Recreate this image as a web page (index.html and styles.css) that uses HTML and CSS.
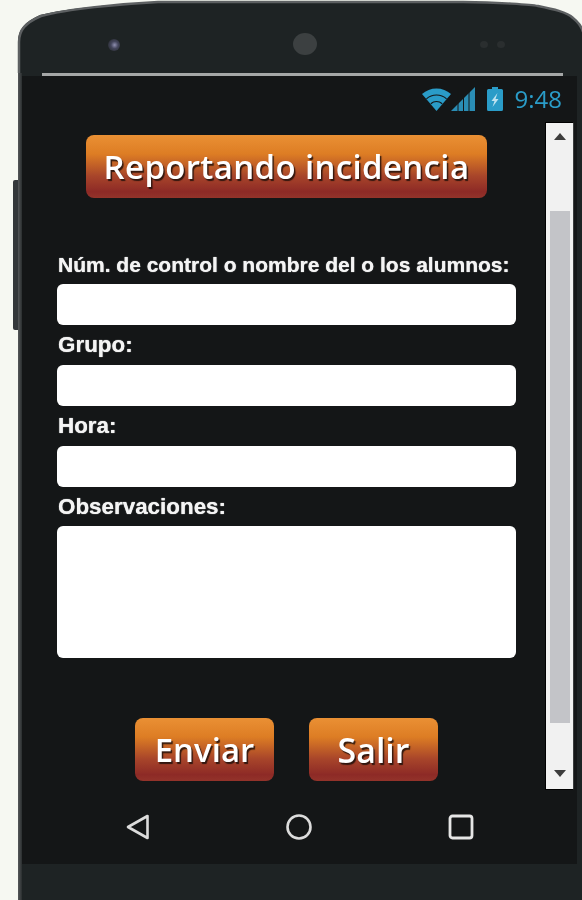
FILE: index.html
```html
<!DOCTYPE html>
<html lang="es">
<head>
<meta charset="utf-8">
<title>Reportando incidencia</title>
<link rel="stylesheet" href="styles.css">
</head>
<body>
<div class="phone">
  <span class="side-button"></span>
  <div class="bezel-top">
    <svg class="bezel-shape" viewBox="0 0 564 73" width="564" height="73" aria-hidden="true">
      <path d="M0 73 V42 C0 30 6 22 22 15 C50 8 100 4 140 2 H445 C480 2 515 5 520 6 C535 9 549 12 555 18 C560 22 564 28 565 32 V73 Z" fill="#1e2324"/>
      <path d="M1 73 V42 C1 30 7 23 23 16 C50 9 100 4 140 2 H445 C480 2 515 5 520 6 C535 9 549 12 555 18 C560 22 564 28 565 32" fill="none" stroke="#5d6062" stroke-width="2.500"/>
    </svg>
    <span class="speaker-dot"></span>
    <span class="camera"></span>
    <span class="sensors"><i></i><i></i></span>
  </div>
  <div class="hairline"></div>
  <div class="screen">
    <div class="statusbar">
      <svg class="ic-wifi" viewBox="0 0 29 24" width="29" height="24" aria-hidden="true">
        <path d="M14.500 24 L0 7 A21.600 21.600 0 0 1 29 7 Z" fill="#2a9cc8"/>
        <path d="M4.430 11.900 A15 15 0 0 1 24.570 11.900 M8.800 16.700 A8.500 8.500 0 0 1 20.200 16.700" fill="none" stroke="#141617" stroke-width="1.200"/>
      </svg>
      <svg class="ic-signal" viewBox="0 0 24 24" width="24" height="24" aria-hidden="true">
        <path d="M0 24 L24 0 V24 Z" fill="#2a8db5"/>
        <path d="M7 0 V24 M12.500 0 V24 M18 0 V24" fill="none" stroke="#141617" stroke-width="1"/>
      </svg>
      <svg class="ic-battery" viewBox="0 0 16 24" width="16" height="24" aria-hidden="true">
        <path d="M5 0 H11 V2 H14.500 Q16 2 16 3.500 V22.500 Q16 24 14.500 24 H1.500 Q0 24 0 22.500 V3.500 Q0 2 1.500 2 H5 Z" fill="#2a9cc8"/>
        <path d="M10.500 6 L4.500 14 H7.500 L5.500 20 L11.500 12 H8.500 Z" fill="#bfe3f0"/>
      </svg>
      <span class="clock">9:48</span>
    </div>
    <div class="viewport">
      <div class="form">
        <div class="title-row"><div class="btn btn-title">Reportando incidencia</div></div>
        <label class="field-label">Núm. de control o nombre del o los alumnos:</label>
        <div class="input"></div>
        <label class="field-label field-label-short">Grupo:</label>
        <div class="input"></div>
        <label class="field-label field-label-short">Hora:</label>
        <div class="input"></div>
        <label class="field-label field-label-short field-label-last">Observaciones:</label>
        <div class="input input-area"></div>
        <div class="actions">
          <div class="btn btn-send">Enviar</div>
          <div class="btn btn-exit">Salir</div>
        </div>
      </div>
      <div class="scrollbar">
        <span class="arrow arrow-up"></span>
        <span class="thumb"></span>
        <span class="arrow arrow-down"></span>
      </div>
    </div>
    <div class="navbar">
      <svg viewBox="0 0 26 28" width="26" height="28" aria-hidden="true"><path d="M22.500 3 V25 L3 14 Z" fill="none" stroke="#dcdcdc" stroke-width="2.600" stroke-linejoin="round"/></svg>
      <svg viewBox="0 0 28 28" width="28" height="28" aria-hidden="true"><circle cx="14" cy="14" r="11.500" fill="none" stroke="#dcdcdc" stroke-width="2.600"/></svg>
      <svg viewBox="0 0 28 28" width="28" height="28" aria-hidden="true"><rect x="3" y="3" width="22" height="22" rx="2.500" fill="none" stroke="#e6e6e6" stroke-width="2.800"/></svg>
    </div>
  </div>
</div>
</body>
</html>
```
FILE: styles.css
```css
html, body {
  margin: 0;
  height: 900px;
  overflow: hidden;
  background: #f6f8f2;
}
.phone {
  position: relative;
  box-sizing: border-box;
  margin: 0 0 0 18px;
  width: 564px;
  height: 900px;
  padding-left: 4px;
  background:
    linear-gradient(90deg, #55585a, #2a2e2f) 0 73px / 4px 100% no-repeat,
    linear-gradient(transparent 73px, #1e2324 73px);
  filter: blur(0.4px);
}
.side-button {
  position: absolute;
  left: -5px;
  top: 180px;
  width: 5px;
  height: 150px;
  background: #33373a;
  border-radius: 2px 0 0 2px;
}
.bezel-top {
  position: relative;
  height: 73px;
}
.bezel-shape, .speaker-dot, .camera, .sensors {
  position: absolute;
}
.bezel-shape {
  left: -4px;
  top: 0;
  overflow: visible;
}
.speaker-dot {
  left: 86px;
  top: 39px;
  width: 12px;
  height: 12px;
  border-radius: 50%;
  background: radial-gradient(circle at 55% 50%, #8f8fb0 0, #44465c 40%, #26292c 90%);
}
.camera {
  left: 271px;
  top: 33px;
  width: 24px;
  height: 22px;
  border-radius: 50%;
  background: #3c4041;
}
.sensors {
  left: 458px;
  top: 41px;
  display: flex;
  gap: 9px;
}
.sensors i {
  width: 8px;
  height: 7px;
  border-radius: 50%;
  background: #2a2e2f;
}
.hairline {
  height: 3px;
  margin: 0 19px 0 20px;
  background: #a5a7a7;
}
.screen {
  width: 555px;
  height: 788px;
  background: #141617;
  display: flex;
  flex-direction: column;
}
.statusbar {
  box-sizing: border-box;
  height: 46px;
  padding: 11px 15px 0 0;
  display: flex;
  justify-content: flex-end;
  align-items: flex-start;
}
.ic-signal { margin-left: 0; }
.ic-battery { margin-left: 12px; }
.clock {
  margin-left: 12px;
  font: 24px/24px "Open Sans", sans-serif;
  color: #2a9cc8;
}
.viewport {
  display: flex;
  height: 668px;
}
.form {
  width: 459px;
  margin-left: 35px;
}
.title-row {
  padding: 13px 0 0 29px;
  height: 63px;
  margin-bottom: 54px;
}
.btn {
  display: flex;
  align-items: center;
  justify-content: center;
  box-sizing: border-box;
  height: 63px;
  border-radius: 8px;
  background: linear-gradient(#ea9034 0, #dd7d24 30%, #a8452a 65%, #8d2a26 90%, #93332a 100%);
  color: #fff;
  font-family: "Open Sans", sans-serif;
  font-weight: 600;
  text-shadow: 1.500px 1.500px 1px rgba(30, 15, 10, 0.85);
}
.btn-title {
  width: 401px;
  font-size: 33px;
  letter-spacing: 0.350px;
}
.field-label {
  display: block;
  height: 32px;
  padding-left: 1px;
  font: bold 21px/26px "Liberation Sans", sans-serif;
  color: #f4f4f4;
  text-shadow: 0 0 1px #fff;
  white-space: nowrap;
}
.field-label-short {
  font-size: 22.400px;
  line-height: 24px;
}
.field-label-last {
  height: 31px;
}
.input {
  height: 41px;
  background: #fff;
  border-radius: 6px;
  margin-bottom: 8px;
}
.input-area {
  height: 132px;
  margin-bottom: 60px;
}
.actions {
  display: flex;
  padding-left: 78px;
  gap: 35px;
}
.btn-send {
  width: 139px;
  font-size: 33px;
}
.btn-exit {
  width: 129px;
  font-size: 34px;
}
.scrollbar {
  box-sizing: border-box;
  width: 29px;
  height: 668px;
  margin-left: 29px;
  background: #f1f1f1;
  border: 1px solid #000;
  border-right-color: #3a3c3d;
  display: flex;
  flex-direction: column;
  align-items: center;
  padding: 10px 0 11px;
}
.thumb {
  width: 20px;
  height: 512px;
  margin: 71px 0 37px;
  background: #c3c4c8;
}
.arrow {
  width: 0;
  height: 0;
  border-left: 6px solid transparent;
  border-right: 6px solid transparent;
}
.arrow-up { border-bottom: 7px solid #3c3c3c; }
.arrow-down { border-top: 7px solid #3c3c3c; margin-top: 10px; }
.navbar {
  flex: 1;
  display: flex;
  justify-content: space-between;
  align-items: center;
  padding: 0 102px 0 103px;
}
```
